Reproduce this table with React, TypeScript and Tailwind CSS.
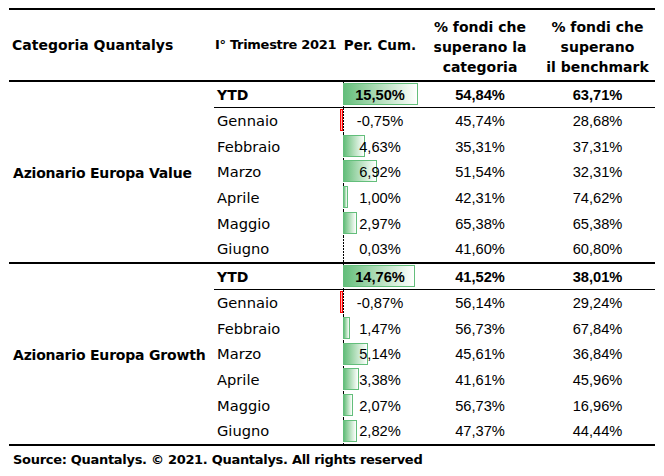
import React from "react";

type Row = { label: string; value: number; cat: string; bench: string };
type Group = { name: string; ytd: Row; months: Row[] };

const groups: Group[] = [
  {
    name: "Azionario Europa Value",
    ytd: { label: "YTD", value: 15.5, cat: "54,84%", bench: "63,71%" },
    months: [
      { label: "Gennaio", value: -0.75, cat: "45,74%", bench: "28,68%" },
      { label: "Febbraio", value: 4.63, cat: "35,31%", bench: "37,31%" },
      { label: "Marzo", value: 6.92, cat: "51,54%", bench: "32,31%" },
      { label: "Aprile", value: 1.0, cat: "42,31%", bench: "74,62%" },
      { label: "Maggio", value: 2.97, cat: "65,38%", bench: "65,38%" },
      { label: "Giugno", value: 0.03, cat: "41,60%", bench: "60,80%" },
    ],
  },
  {
    name: "Azionario Europa Growth",
    ytd: { label: "YTD", value: 14.76, cat: "41,52%", bench: "38,01%" },
    months: [
      { label: "Gennaio", value: -0.87, cat: "56,14%", bench: "29,24%" },
      { label: "Febbraio", value: 1.47, cat: "56,73%", bench: "67,84%" },
      { label: "Marzo", value: 5.14, cat: "45,61%", bench: "36,84%" },
      { label: "Aprile", value: 3.38, cat: "41,61%", bench: "45,96%" },
      { label: "Maggio", value: 2.07, cat: "56,73%", bench: "16,96%" },
      { label: "Giugno", value: 2.82, cat: "47,37%", bench: "44,44%" },
    ],
  },
];

const pct = (v: number) => v.toFixed(2).replace(".", ",") + "%";

// excel style data bar, axis sits 3px into the cell
function PerCum({ value, bold }: { value: number; bold?: boolean }) {
  const w = Math.abs(value) * 4.85;
  return (
    <div className="relative h-full flex items-center justify-center">
      <div className="absolute left-[3px] top-0 bottom-0 w-px bg-[repeating-linear-gradient(to_bottom,#000_0_2px,transparent_2px_3px)]" />
      {value >= 0 ? (
        w >= 1 && (
          <div
            className="absolute left-[3px] top-[1px] h-[22px] border border-[#63be7b] bg-linear-to-r from-[#63be7b] to-white"
            style={{ width: w }}
          />
        )
      ) : (
        <div className="absolute left-0 top-[1px] h-[22px] w-[3px] border border-[#ff0000] bg-[#ffb3b3]" />
      )}
      <span
        className={`relative font-['Liberation_Sans',sans-serif] text-[14.67px] ${
          bold ? "font-bold" : ""
        }`}
      >
        {pct(value)}
      </span>
    </div>
  );
}

function DataRow({ row, ytd }: { row: Row; ytd?: boolean }) {
  return (
    <div
      className={`grid grid-cols-[126px_80px_120px_115px] ${
        ytd ? "h-[26px] border-b border-black font-bold" : "h-[25.7px] text-[14.67px]"
      }`}
    >
      <div className="flex items-center pl-[3px]">{row.label}</div>
      <PerCum value={row.value} bold={ytd} />
      <div className="flex items-center justify-center font-['Liberation_Sans',sans-serif] text-[14.67px]">
        {row.cat}
      </div>
      <div className="flex items-center justify-center font-['Liberation_Sans',sans-serif] text-[14.67px]">
        {row.bench}
      </div>
    </div>
  );
}

export default function App() {
  return (
    <div className="w-[664px] h-[476px] bg-white text-black pt-[8px] pl-[9px] font-['DejaVu_Sans',sans-serif] text-[14px] leading-[20px]">
      <div className="w-[646px]">
        <div className="grid grid-cols-[205px_126px_80px_120px_115px] h-[74px] border-y-2 border-black font-bold">
          <div className="flex items-center pl-[3px]">Categoria Quantalys</div>
          <div className="flex items-center pl-[1px] text-[13px] tracking-[-0.3px] whitespace-nowrap">
            I° Trimestre 2021
          </div>
          <div className="flex items-center justify-center text-[13.5px] whitespace-nowrap">
            Per. Cum.
          </div>
          <div className="flex items-center justify-center text-center pt-[3px]">
            % fondi che
            <br />
            superano la
            <br />
            categoria
          </div>
          <div className="flex items-center justify-center text-center pt-[3px]">
            % fondi che
            <br />
            superano
            <br />
            il benchmark
          </div>
        </div>

        {groups.map((g) => (
          <div key={g.name} className="flex border-b-2 border-black">
            <div className="w-[205px] flex items-center pl-[4px] pt-[2px] font-bold tracking-[-0.2px] whitespace-nowrap">
              {g.name}
            </div>
            <div className="w-[441px]">
              <DataRow row={g.ytd} ytd />
              {g.months.map((m) => (
                <DataRow key={m.label} row={m} />
              ))}
            </div>
          </div>
        ))}

        <div className="mt-[4px] pl-[4px] font-bold text-[13px] tracking-[-0.3px] whitespace-nowrap">
          Source: Quantalys. © 2021. Quantalys. All rights reserved
        </div>
      </div>
    </div>
  );
}
